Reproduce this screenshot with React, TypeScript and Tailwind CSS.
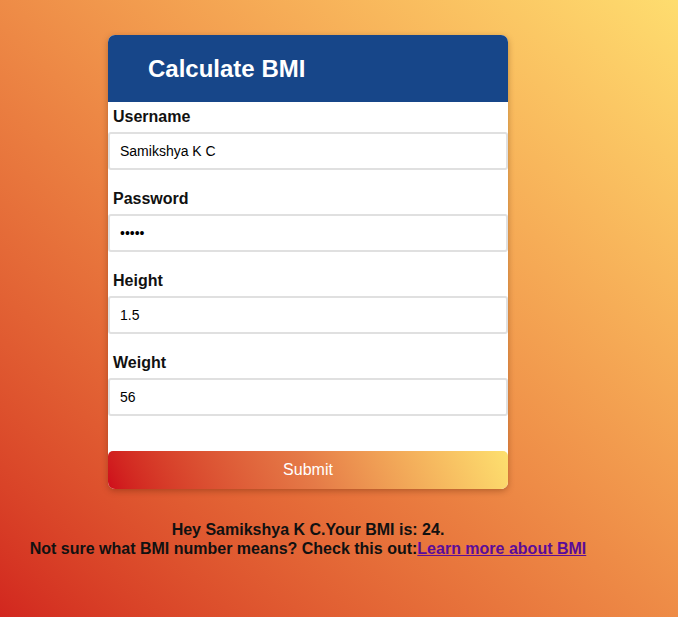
import React from "react";

const fields = [
  { label: "Username", type: "text", value: "Samikshya K C" },
  { label: "Password", type: "password", value: "12345" },
  { label: "Height", type: "text", value: "1.5" },
  { label: "Weight", type: "text", value: "56" },
];

export default function App() {
  return (
    <div
      className="min-h-screen w-full bg-linear-to-tr from-[#d2261f] to-[#fedd6f] text-[#111]"
      style={{ fontFamily: '"Liberation Sans", Arial, sans-serif' }}
    >
      <div className="flex w-[616px] flex-col items-center pt-[35px]">
        <form
          className="flex w-[400px] flex-col overflow-hidden rounded-[7px] bg-white shadow-[0_2px_6px_rgba(80,30,0,.35)]"
          onSubmit={(e) => e.preventDefault()}
        >
          <div className="flex h-[67px] items-center bg-[#174689] pl-[40px]">
            <h1 className="text-[24px] font-bold text-white">Calculate BMI</h1>
          </div>
          {fields.map((f, i) => (
            <div key={f.label} className={i === 0 ? "mt-[6px]" : "mt-[20px]"}>
              <label className="block pl-[5px] text-[16px] leading-[18px] font-bold">{f.label}</label>
              <input
                type={f.type}
                value={f.value}
                readOnly
                className="mt-[6px] block h-[38px] w-full rounded-[3px] border-2 border-[#e0e0e0] bg-white px-[10px] text-[14px] text-black outline-none"
              />
            </div>
          ))}
          <button
            type="submit"
            className="mt-[35px] h-[38px] w-full rounded-[5px] bg-linear-65 from-[#cf0a1b] via-[#e57a47] to-[#fde06f] text-[16px] text-white"
          >
            Submit
          </button>
        </form>
        <div className="mt-[31px] text-center text-[16px] leading-[19px] font-bold">
          <div>Hey Samikshya K C.Your BMI is: 24.</div>
          <div>
            Not sure what BMI number means? Check this out:
            <a href="#" className="text-[#5b0c99] underline">
              Learn more about BMI
            </a>
          </div>
        </div>
      </div>
    </div>
  );
}
